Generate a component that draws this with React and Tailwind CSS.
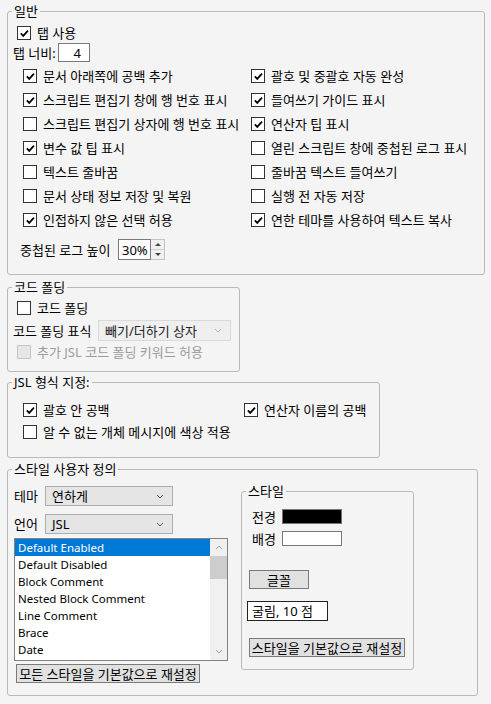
import React from "react";

const font = { fontFamily: '"Noto Sans", "Noto Sans CJK KR", sans-serif' };

// 체크박스
function Box({ checked, disabled }) {
  return (
    <span
      className={`w-[14px] h-[14px] shrink-0 border flex items-center justify-center ${
        disabled ? "border-[#c4c4c4] bg-[#e6e6e6]" : "border-[#333333] bg-white"
      }`}
    >
      {checked && (
        <svg viewBox="0 0 13 13" className="w-[11px] h-[11px]">
          <path d="M2.2 6.4 L5 9.3 L10.6 3.2" stroke="#000" strokeWidth="2.1" fill="none" />
        </svg>
      )}
    </span>
  );
}

function Check({ label, checked, disabled, className = "" }) {
  return (
    <div className={`flex items-center gap-[6px] ${className}`}>
      <Box checked={checked} disabled={disabled} />
      <span className={`whitespace-nowrap leading-[16px] ${disabled ? "text-[#9b9b9b]" : "text-black"}`}>{label}</span>
    </div>
  );
}

function Group({ title, className = "", children }) {
  return (
    <fieldset className={`border border-[#b9b9b9] rounded-[3px] ${className}`}>
      <legend className="ml-[4px] px-[2px] h-[16px] leading-[16px]">{title}</legend>
      {children}
    </fieldset>
  );
}

function Chevron({ color = "#555" }) {
  return (
    <svg viewBox="0 0 8 5" className="w-[8px] h-[5px]">
      <path d="M1 1 L4 4 L7 1" stroke={color} strokeWidth="1" fill="none" />
    </svg>
  );
}

function Select({ value, className = "" }) {
  return (
    <div className={`flex items-center justify-between border border-[#adadad] bg-[#e5e5e5] pl-[6px] pr-[8px] ${className}`}>
      <span className="leading-[16px]">{value}</span>
      <Chevron />
    </div>
  );
}

const leftChecks = [
  { label: "문서 아래쪽에 공백 추가", checked: true },
  { label: "스크립트 편집기 창에 행 번호 표시", checked: true },
  { label: "스크립트 편집기 상자에 행 번호 표시", checked: false },
  { label: "변수 값 팁 표시", checked: true },
  { label: "텍스트 줄바꿈", checked: false },
  { label: "문서 상태 정보 저장 및 복원", checked: false },
  { label: "인접하지 않은 선택 허용", checked: true },
];

const rightChecks = [
  { label: "괄호 및 중괄호 자동 완성", checked: true },
  { label: "들여쓰기 가이드 표시", checked: true },
  { label: "연산자 팁 표시", checked: true },
  { label: "열린 스크립트 창에 중첩된 로그 표시", checked: false },
  { label: "줄바꿈 텍스트 들여쓰기", checked: false },
  { label: "실행 전 자동 저장", checked: false },
  { label: "연한 테마를 사용하여 텍스트 복사", checked: true },
];

const styleItems = [
  "Default Enabled",
  "Default Disabled",
  "Block Comment",
  "Nested Block Comment",
  "Line Comment",
  "Brace",
  "Date",
];

export default function App() {
  return (
    <div style={font} className="w-[491px] h-[704px] bg-[#f4f4f4] text-[13px] text-black pl-[7px] pt-[3px] overflow-hidden">
      {/* 일반 */}
      <Group title="일반" className="w-[478px] pb-[14px]">
        <Check label="탭 사용" checked className="mt-[5px] h-[18px] pl-[9px]" />
        <div className="mt-[1px] h-[19px] pl-[5px] flex items-center">
          <span className="w-[45px] leading-[16px] whitespace-nowrap">탭 너비:</span>
          <div className="w-[32px] h-[19px] bg-white border border-[#7a7a7a] flex items-center justify-end pr-[8px] leading-[16px]">4</div>
        </div>
        <div className="mt-[2px] grid grid-cols-[228px_1fr] pl-[15px]">
          {leftChecks.map((c, i) => (
            <React.Fragment key={i}>
              <Check label={c.label} checked={c.checked} className="h-[24px]" />
              <Check label={rightChecks[i].label} checked={rightChecks[i].checked} className="h-[24px]" />
            </React.Fragment>
          ))}
        </div>
        <div className="mt-[7px] h-[21px] pl-[12px] flex items-center">
          <span className="w-[98px] leading-[16px] whitespace-nowrap">중첩된 로그 높이</span>
          <div className="w-[33px] h-[21px] bg-white border border-[#7a7a7a] flex items-center pl-[3px] leading-[16px]">30%</div>
          <div className="w-[14px] h-[21px] flex flex-col border-y border-r border-[#c4c4c4] bg-[#f0f0f0]">
            <div className="flex-1 flex items-center justify-center border-b border-[#d0d0d0]">
              <svg viewBox="0 0 6 3" className="w-[6px] h-[3px]"><path d="M0 3 L3 0 L6 3 Z" fill="#444" /></svg>
            </div>
            <div className="flex-1 flex items-center justify-center">
              <svg viewBox="0 0 6 3" className="w-[6px] h-[3px]"><path d="M0 0 L3 3 L6 0 Z" fill="#444" /></svg>
            </div>
          </div>
        </div>
      </Group>

      {/* 코드 폴딩 */}
      <Group title="코드 폴딩" className="mt-[4px] w-[233px] pb-[10px]">
        <Check label="코드 폴딩" className="mt-[4px] h-[18px] pl-[9px]" />
        <div className="mt-[3px] h-[21px] pl-[5px] flex items-center">
          <span className="w-[85px] leading-[16px] whitespace-nowrap">코드 폴딩 표식</span>
          <div className="w-[133px] h-[21px] border border-[#d9d9d9] bg-[#efefef] flex items-center justify-between pl-[6px] pr-[8px]">
            <span className="leading-[16px] text-[#222]">빼기/더하기 상자</span>
            <Chevron color="#b5b5b5" />
          </div>
        </div>
        <Check label="추가 JSL 코드 폴딩 키워드 허용" disabled className="mt-[2px] h-[18px] pl-[9px]" />
      </Group>

      {/* JSL 형식 지정 */}
      <Group title="JSL 형식 지정:" className="mt-[2px] w-[373px] pb-[14px]">
        <div className="mt-[9px] grid grid-cols-[221px_1fr] pl-[15px]">
          <Check label="괄호 안 공백" checked className="h-[22px]" />
          <Check label="연산자 이름의 공백" checked className="h-[22px]" />
          <Check label="알 수 없는 개체 메시지에 색상 적용" className="h-[22px]" />
        </div>
      </Group>

      {/* 스타일 사용자 정의 */}
      <Group title="스타일 사용자 정의" className="mt-[3px] w-[471px] pb-[12px]">
        <div className="flex items-start">
          <div className="w-[233px] pl-[6px]">
            <div className="mt-[9px] h-[20px] flex items-center">
              <span className="w-[31px] leading-[16px]">테마</span>
              <Select value="연하게" className="w-[128px] h-[20px]" />
            </div>
            <div className="mt-[8px] h-[20px] flex items-center">
              <span className="w-[31px] leading-[16px]">언어</span>
              <Select value="JSL" className="w-[128px] h-[20px]" />
            </div>
            <div className="mt-[4px] w-[214px] h-[123px] border border-[#828282] bg-white flex text-[11.5px]">
              <div className="flex-1">
                {styleItems.map((it, i) => (
                  <div
                    key={it}
                    className={`h-[17px] leading-[17px] pl-[3px] whitespace-nowrap ${i === 0 ? "bg-[#0078d7] text-white" : "text-black"}`}
                  >
                    {it}
                  </div>
                ))}
              </div>
              <div className="w-[17px] bg-[#f0f0f0] flex flex-col">
                <div className="h-[17px] flex items-center justify-center">
                  <svg viewBox="0 0 8 5" className="w-[8px] h-[5px]"><path d="M1 4 L4 1 L7 4" stroke="#a0a0a0" strokeWidth="1" fill="none" /></svg>
                </div>
                <div className="h-[23px] bg-[#cdcdcd]"></div>
                <div className="flex-1"></div>
                <div className="h-[17px] flex items-center justify-center">
                  <svg viewBox="0 0 8 5" className="w-[8px] h-[5px]"><path d="M1 1 L4 4 L7 1" stroke="#a0a0a0" strokeWidth="1" fill="none" /></svg>
                </div>
              </div>
            </div>
            <button className="mt-[3px] ml-[2px] w-[184px] h-[19px] bg-[#e1e1e1] border border-[#7a7a7a] flex items-center justify-center leading-[16px] whitespace-nowrap">
              모든 스타일을 기본값으로 재설정
            </button>
          </div>

          <Group title="스타일" className="mt-[6px] w-[173px] pb-[12px]">
            <div className="pl-[10px]">
              <div className="mt-[10px] h-[15px] flex items-center">
                <span className="w-[30px] leading-[16px]">전경</span>
                <div className="w-[60px] h-[15px] bg-black border border-[#777]"></div>
              </div>
              <div className="mt-[7px] h-[15px] flex items-center">
                <span className="w-[30px] leading-[16px]">배경</span>
                <div className="w-[60px] h-[15px] bg-white border border-[#777]"></div>
              </div>
            </div>
            <button className="mt-[24px] ml-[7px] w-[60px] h-[19px] bg-[#e1e1e1] border border-[#7a7a7a] flex items-center justify-center leading-[16px]">
              글꼴
            </button>
            <div className="mt-[12px] ml-[5px] w-[81px] h-[20px] bg-white border border-[#222] flex items-center pl-[4px] leading-[16px] whitespace-nowrap">
              굴림, 10 점
            </div>
            <button className="mt-[17px] ml-[7px] w-[156px] h-[19px] bg-[#e1e1e1] border border-[#7a7a7a] flex items-center justify-center leading-[16px] whitespace-nowrap">
              스타일을 기본값으로 재설정
            </button>
          </Group>
        </div>
      </Group>
    </div>
  );
}
